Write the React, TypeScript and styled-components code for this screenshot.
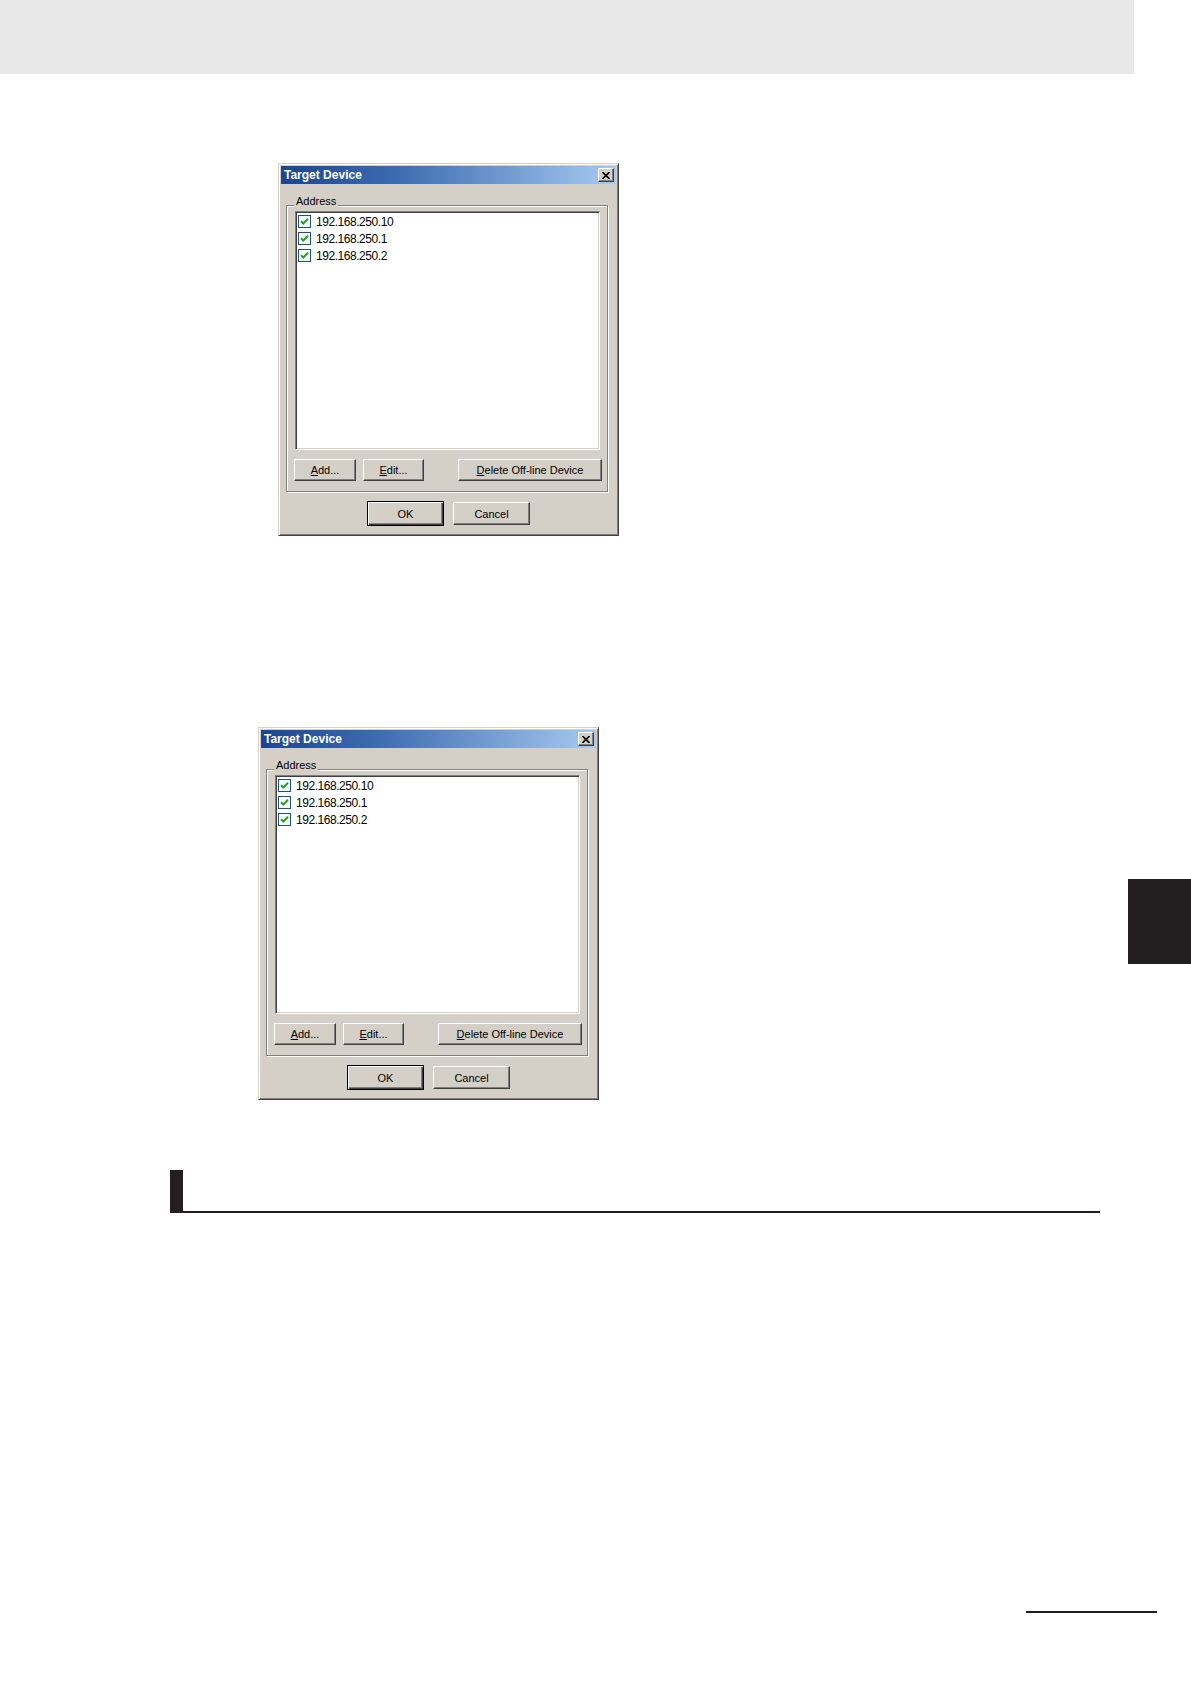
import styled, { createGlobalStyle } from "styled-components"

const GlobalStyle = createGlobalStyle`
  html, body {
    margin: 0;
    padding: 0;
    background: #fff;
  }
  body {
    font-family: "Liberation Sans", Arial, sans-serif;
  }
`

const addresses = ["192.168.250.10", "192.168.250.1", "192.168.250.2"]

const CheckMark = () => (
  <svg width="11" height="11" viewBox="0 0 11 11">
    <path d="M2 5.2 L4.3 7.5 L9 2.8" fill="none" stroke="#21a121" strokeWidth="2" />
  </svg>
)

const CloseGlyph = () => (
  <svg width="8" height="7" viewBox="0 0 8 7">
    <path d="M0.5 0 L7.5 7 M7.5 0 L0.5 7" stroke="#000" strokeWidth="1.6" />
  </svg>
)

const TargetDeviceDialog = () => (
  <Dialog>
    <TitleBar>
      <span>Target Device</span>
      <CloseButton aria-label="Close">
        <CloseGlyph />
      </CloseButton>
    </TitleBar>

    <GroupBox>
      <GroupLabel>Address</GroupLabel>
      <ListBox>
        {addresses.map(a => (
          <ListRow key={a}>
            <CheckBox>
              <CheckMark />
            </CheckBox>
            <span>{a}</span>
          </ListRow>
        ))}
      </ListBox>
      <ButtonRow>
        <WinButton $w={62}><u>A</u>dd...</WinButton>
        <WinButton $w={61} $gap={7}><u>E</u>dit...</WinButton>
        <WinButton $w={144} $push><u>D</u>elete Off-line Device</WinButton>
      </ButtonRow>
    </GroupBox>

    <FooterRow>
      <WinButton $w={77} $default>OK</WinButton>
      <WinButton $w={77}>Cancel</WinButton>
    </FooterRow>
  </Dialog>
)

const App = () => {
  return (
    <>
      <GlobalStyle />
      <Page>
        <HeaderBand />

        <Figure $top={89} $left={278}>
          <TargetDeviceDialog />
        </Figure>

        <Figure $top={191} $left={258}>
          <TargetDeviceDialog />
        </Figure>

        <SectionHeading />

        <PageRule />

        <ThumbTab />
      </Page>
    </>
  )
}

const Page = styled.div`
  position: relative;
  width: 1191px;
  height: 1684px;
  overflow: hidden;
  background: #fff;
`

const HeaderBand = styled.div`
  width: 1134px;
  height: 74px;
  background: #e8e8e8;
`

const Figure = styled.div<{ $top: number; $left: number }>`
  margin-top: ${p => p.$top}px;
  margin-left: ${p => p.$left}px;
  width: max-content;
`

const Dialog = styled.div`
  width: 341px;
  height: 373px;
  box-sizing: border-box;
  background: #d4d0c8;
  border: 1px solid;
  border-color: #d4d0c8 #404040 #404040 #d4d0c8;
  box-shadow: inset 1px 1px #fff, inset -1px -1px #808080;
  padding: 2px;
  display: flex;
  flex-direction: column;
  font-family: "Liberation Sans", Arial, sans-serif;
  color: #000;
`

const TitleBar = styled.div`
  height: 18px;
  display: flex;
  align-items: center;
  justify-content: space-between;
  padding: 0 2px 0 3px;
  background: linear-gradient(to right, #1c4590, #3d6cb0 35%, #a6caf0);
  color: #fff;
  font-weight: bold;
  font-size: 12px;
`

const CloseButton = styled.div`
  width: 16px;
  height: 14px;
  box-sizing: border-box;
  display: flex;
  align-items: center;
  justify-content: center;
  background: #d4d0c8;
  border: 1px solid;
  border-color: #fff #404040 #404040 #fff;
  box-shadow: inset -1px -1px #808080;
`

const GroupBox = styled.div`
  position: relative;
  margin: 21px 0 0 5px;
  width: 322px;
  height: 287px;
  box-sizing: border-box;
  border: 1px solid #808080;
  box-shadow: inset 1px 1px #fff, 1px 1px #fff;
  padding: 5px 0 0 8px;
  display: flex;
  flex-direction: column;
`

const GroupLabel = styled.div`
  position: absolute;
  top: -11px;
  left: 7px;
  padding: 0 2px;
  background: #d4d0c8;
  font-size: 11px;
  line-height: 13px;
`

const ListBox = styled.div`
  width: 305px;
  height: 239px;
  box-sizing: border-box;
  background: #fff;
  border: 1px solid;
  border-color: #808080 #fff #fff #808080;
  box-shadow: inset 1px 1px #404040, inset -1px -1px #d4d0c8;
  padding: 1px 2px;
`

const ListRow = styled.div`
  height: 17px;
  display: flex;
  align-items: center;
  gap: 5px;
  font-size: 12px;
  letter-spacing: -0.45px;
`

const CheckBox = styled.div`
  width: 13px;
  height: 13px;
  box-sizing: border-box;
  border: 1px solid #1c5180;
  background: #fff;
  display: flex;
  align-items: center;
  justify-content: center;
`

const ButtonRow = styled.div`
  display: flex;
  width: 308px;
  margin: 9px 0 0 -1px;
`

const FooterRow = styled.div`
  display: flex;
  justify-content: center;
  align-items: center;
  gap: 9px;
  margin-top: 9px;
`

const WinButton = styled.div<{ $w: number; $gap?: number; $push?: boolean; $default?: boolean }>`
  width: ${p => p.$w}px;
  height: ${p => (p.$default ? 25 : p.$w === 77 ? 23 : 22)}px;
  margin-left: ${p => (p.$push ? "auto" : `${p.$gap ?? 0}px`)};
  box-sizing: border-box;
  display: flex;
  align-items: center;
  justify-content: center;
  background: #d4d0c8;
  font-size: 11px;
  color: #000;
  border: 1px solid;
  border-color: ${p => (p.$default ? "#000" : "#fff #404040 #404040 #fff")};
  box-shadow: ${p =>
    p.$default
      ? "inset 1px 1px #fff, inset -1px -1px #404040, inset -2px -2px #808080"
      : "inset -1px -1px #808080"};

  u {
    text-decoration: underline;
  }
`

const SectionHeading = styled.div`
  margin: 70px 0 0 170px;
  width: 930px;
  height: 43px;
  box-sizing: border-box;
  border-left: 13px solid #231f20;
  border-bottom: 2px solid #231f20;
`

const PageRule = styled.div`
  margin: 398px 0 0 1026px;
  width: 131px;
  height: 2px;
  background: #231f20;
`

const ThumbTab = styled.div`
  position: absolute;
  top: 879px;
  left: 1128px;
  width: 63px;
  height: 85px;
  background: #231f20;
`

export default App
